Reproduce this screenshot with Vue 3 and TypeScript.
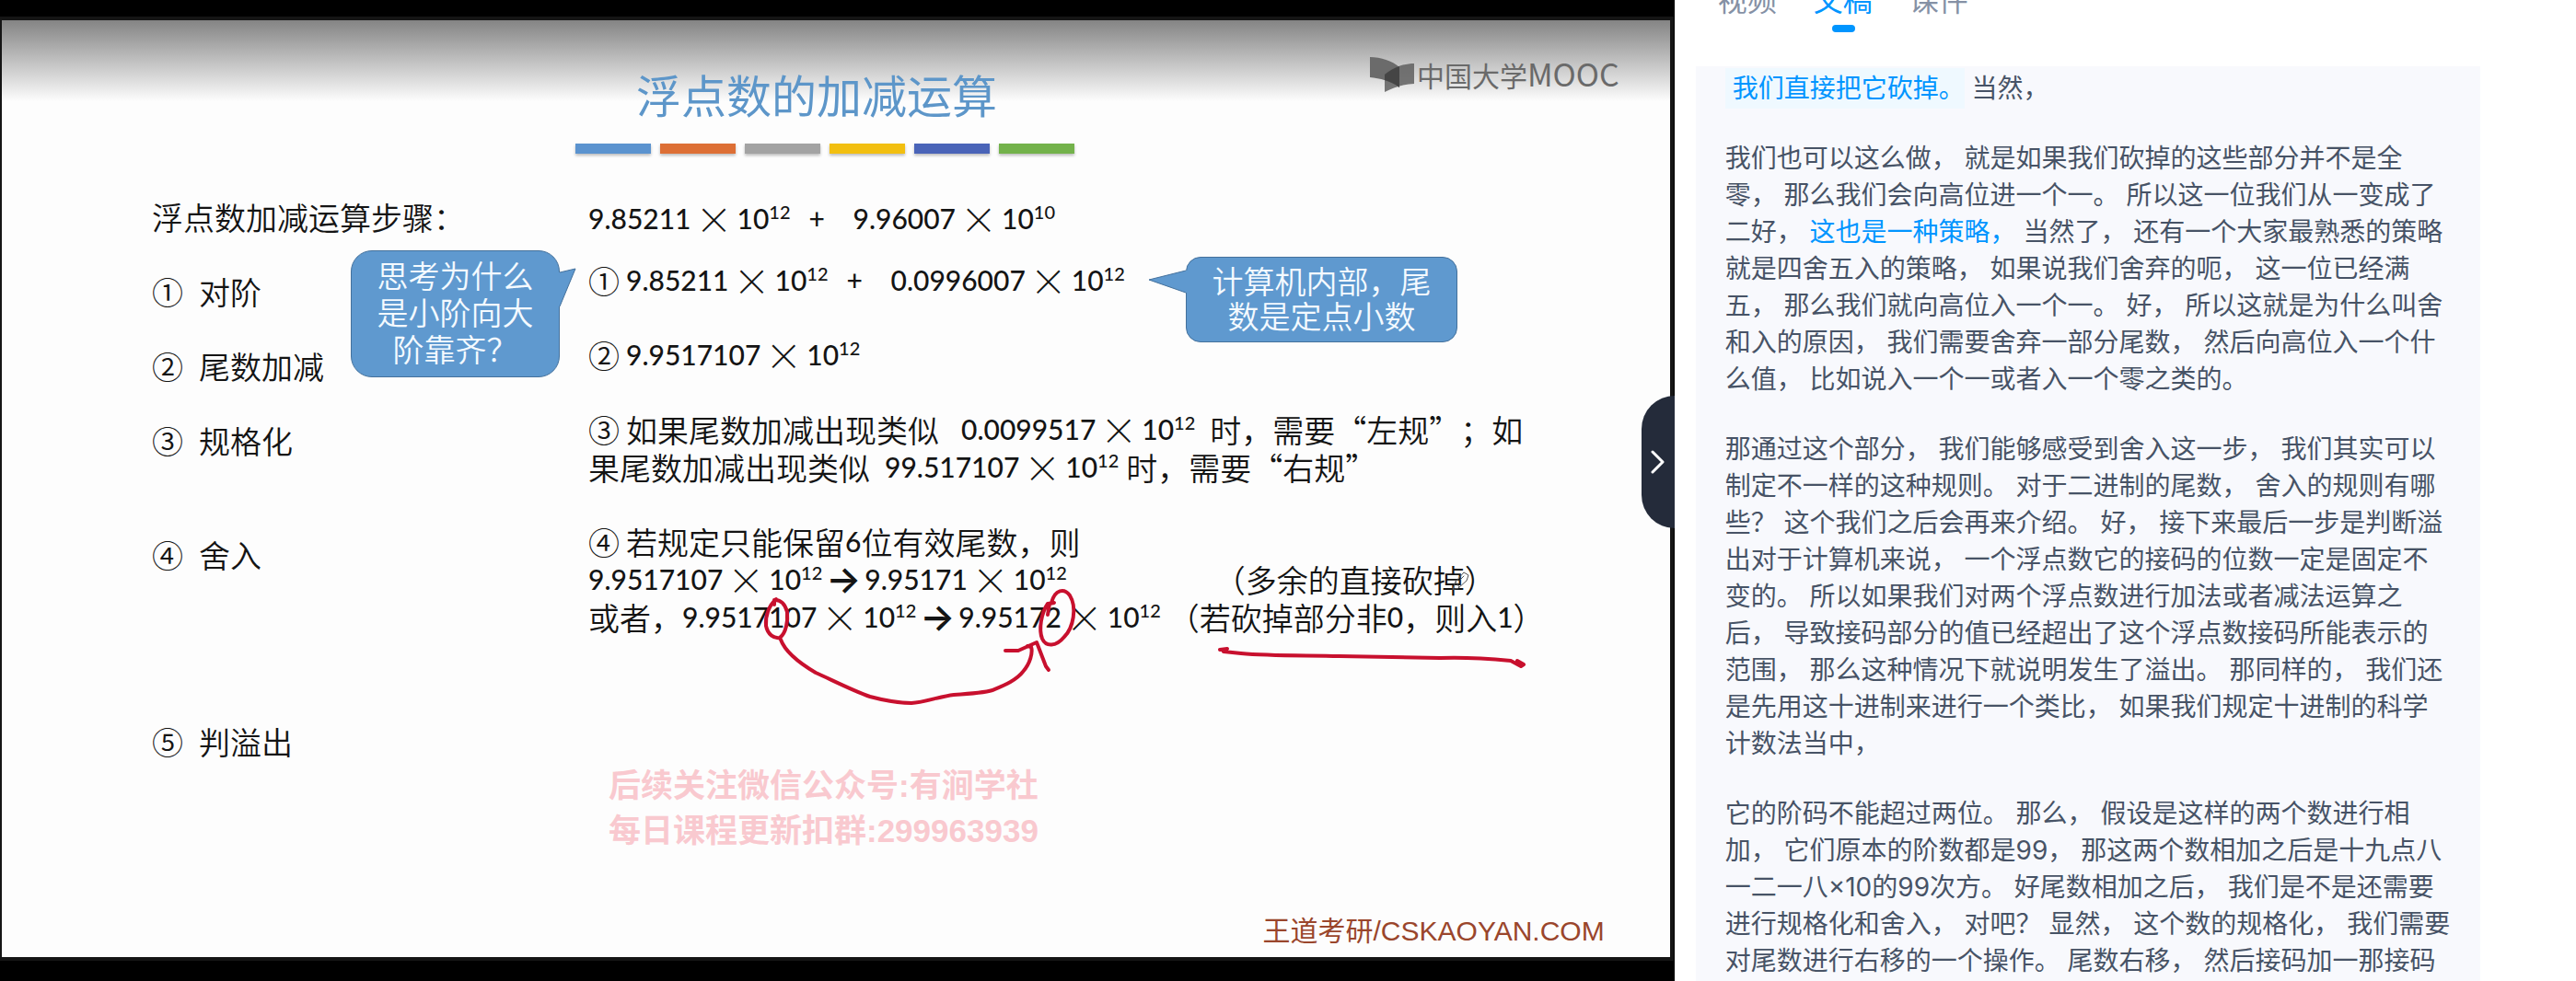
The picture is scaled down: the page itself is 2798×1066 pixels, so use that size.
<script setup lang="ts">
import { ref } from 'vue'

type PartKind = 'text' | 'num' | 'sup' | 'times' | 'plus' | 'arrow' | 'mark' | 'gap'
interface Part { kind: PartKind; value: string }
interface Line { gap: 'none' | 'small' | 'normal'; parts: Part[]; note?: Part[] }
interface Step { mark: string; label: string; gap: 'none' | 'normal' | 'double' | 'wide' }
interface Segment { text: string; state?: 'current' | 'hot' }

const t = (value: string): Part => ({ kind: 'text', value })
const n = (value: string): Part => ({ kind: 'num', value })
const mark = (value: string): Part => ({ kind: 'mark', value })
const plus: Part = { kind: 'plus', value: '+' }
const arrow: Part = { kind: 'arrow', value: '→' }
const gap: Part = { kind: 'gap', value: ' ' }
const sci = (mantissa: string, exponent: string): Part[] => [
  n(mantissa), { kind: 'times', value: '×' }, n('10'), { kind: 'sup', value: exponent },
]

const bars = ['blue', 'orange', 'gray', 'yellow', 'indigo', 'green']

const steps: Step[] = [
  { mark: '①', label: '对阶', gap: 'normal' },
  { mark: '②', label: '尾数加减', gap: 'normal' },
  { mark: '③', label: '规格化', gap: 'normal' },
  { mark: '④', label: '舍入', gap: 'double' },
  { mark: '⑤', label: '判溢出', gap: 'wide' },
]

const lines: Line[] = [
  { gap: 'none', parts: [...sci('9.85211', '12'), plus, ...sci('9.96007', '10')] },
  { gap: 'small', parts: [mark('①'), ...sci('9.85211', '12'), plus, ...sci('0.0996007', '12')] },
  { gap: 'normal', parts: [mark('②'), ...sci('9.9517107', '12')] },
  { gap: 'normal', parts: [mark('③'), t('如果尾数加减出现类似'), gap, gap, gap, ...sci('0.0099517', '12'), gap, gap, t('时，需要“左规”；如')] },
  { gap: 'none', parts: [t('果尾数加减出现类似'), gap, gap, ...sci('99.517107', '12'), gap, t('时，需要“右规”')] },
  { gap: 'normal', parts: [mark('④'), t('若规定只能保留'), n('6'), t('位有效尾数，则')] },
  { gap: 'none', parts: [...sci('9.9517107', '12'), arrow, ...sci('9.95171', '12')], note: [t('（多余的直接砍掉）')] },
  { gap: 'none', parts: [t('或者，'), ...sci('9.9517107', '12'), arrow, ...sci('9.95172', '12'), gap, t('（若砍掉部分非'), n('0'), t('，则入'), n('1'), t('）')] },
]

const tabs = ['视频', '文稿', '课件']
const activeTab = ref('文稿')
const panelOpen = ref(true)

const paragraphs: Segment[][] = [
  [{ text: '我们直接把它砍掉。', state: 'current' }, { text: ' 当然，' }],
  [
    { text: '我们也可以这么做， 就是如果我们砍掉的这些部分并不是全零， 那么我们会向高位进一个一。 所以这一位我们从一变成了二好， ' },
    { text: '这也是一种策略，', state: 'hot' },
    { text: ' 当然了， 还有一个大家最熟悉的策略就是四舍五入的策略， 如果说我们舍弃的呃， 这一位已经满五， 那么我们就向高位入一个一。 好， 所以这就是为什么叫舍和入的原因， 我们需要舍弃一部分尾数， 然后向高位入一个什么值， 比如说入一个一或者入一个零之类的。' },
  ],
  [{ text: '那通过这个部分， 我们能够感受到舍入这一步， 我们其实可以制定不一样的这种规则。 对于二进制的尾数， 舍入的规则有哪些？ 这个我们之后会再来介绍。 好， 接下来最后一步是判断溢出对于计算机来说， 一个浮点数它的接码的位数一定是固定不变的。 所以如果我们对两个浮点数进行加法或者减法运算之后， 导致接码部分的值已经超出了这个浮点数接码所能表示的范围， 那么这种情况下就说明发生了溢出。 那同样的， 我们还是先用这十进制来进行一个类比， 如果我们规定十进制的科学计数法当中，' }],
  [{ text: '它的阶码不能超过两位。 那么， 假设是这样的两个数进行相加， 它们原本的阶数都是99， 那这两个数相加之后是十九点八一二一八×10的99次方。 好尾数相加之后， 我们是不是还需要进行规格化和舍入， 对吧？ 显然， 这个数的规格化， 我们需要对尾数进行右移的一个操作。 尾数右移， 然后接码加一那接码' }],
]
</script>

<template>
  <main class="page" lang="zh-CN">
    <section class="player">
      <div class="slide">
        <div class="shade"></div>

        <header class="slide-head">
          <h1 class="title">浮点数的加减运算</h1>
          <div class="bars">
            <span v-for="bar in bars" :key="bar" class="bar" :class="bar"></span>
          </div>
        </header>

        <div class="brand">
          <svg class="brand-icon" viewBox="0 0 48 40" aria-hidden="true">
            <path d="M0 1C12 1 24 5 32 12V34C22 27 11 24 0 23Z" fill="#6b6b6b" />
            <path d="M16 20C24 13 36 8 48 8V30C37 30 26 34 16 39Z" fill="#5f5f5f" fill-opacity=".85" />
            <path d="M16 20C21 16 26 13 32 11V34C27 30 22 28 16 26Z" fill="#454545" />
          </svg>
          <span class="brand-text">中国大学<span class="brand-latin">MOOC</span></span>
        </div>

        <div class="body">
          <div class="steps">
            <p class="line">浮点数加减运算步骤：</p>
            <p v-for="step in steps" :key="step.mark" class="line" :class="'gap-' + step.gap">
              <span class="step-mark">{{ step.mark }}</span>{{ step.label }}
            </p>
          </div>
          <div class="work">
            <p v-for="(line, i) in lines" :key="i" class="line" :class="'gap-' + line.gap">
              <span v-for="(part, j) in line.parts" :key="j" :class="part.kind">{{ part.value }}</span>
              <span v-if="line.note" class="note">
                <span v-for="(part, j) in line.note" :key="j" :class="part.kind">{{ part.value }}</span>
              </span>
            </p>
          </div>
        </div>

        <footer class="slide-foot">王道考研/CSKAOYAN.COM</footer>

        <aside class="callout why">
          <svg class="tail" viewBox="0 0 20 44" aria-hidden="true">
            <path class="tail-fill" d="M-2 5H1L18 1L1 42H-2Z" />
            <path class="tail-line" d="M1 5L18 1L1 42" />
          </svg>
          思考为什么<br />是小阶向大<br />阶靠齐？
        </aside>
        <aside class="callout fixed">
          <svg class="tail" viewBox="0 0 42 28" aria-hidden="true">
            <path class="tail-fill" d="M44 2H41L1 12L41 26H44Z" />
            <path class="tail-line" d="M41 2L1 12L41 26" />
          </svg>
          计算机内部，尾<br />数是定点小数
        </aside>

        <div class="watermark">后续关注微信公众号:有涧学社<br />每日课程更新扣群:299963939</div>

        <svg class="ink" viewBox="0 0 1818 1066" aria-hidden="true">
          <path d="M843 651C835 658 831 670 832 680C834 690 841 694 847 693C854 688 856 674 855 665C853 657 848 651 841 652V657" />
          <path d="M848 695C852 706 864 718 886 731C900 737 925 750 945 757C960 761 978 764 990 764C1005 763 1020 757 1036 755C1052 754 1068 753 1078 750C1092 744 1104 739 1111 730C1119 721 1122 709 1120 703L1116 702" />
          <path d="M1092 707H1106L1126 698L1136 724L1139 728" />
          <path d="M1138 668L1140 656L1145 655L1138 656C1131 666 1128 684 1132 694C1136 703 1147 703 1156 692C1166 682 1170 660 1162 647C1156 639 1146 640 1142 655" />
          <path d="M1325 706L1333 705L1329 708L1348 710C1380 713 1420 712 1455 713L1564 715C1590 714 1620 716 1641 718L1652 724L1655 722L1648 718" />
          <path class="pen" d="M1578 640L1581 632L1590 622L1595 625L1593 631L1584 639ZM1581 632L1585 638M1586 630L1590 626" />
        </svg>
      </div>

      <button class="toggle" type="button" aria-label="收起面板" :aria-expanded="panelOpen" @click="panelOpen = !panelOpen">
        <svg viewBox="0 0 16 26" width="16" height="26" aria-hidden="true">
          <path d="M2 2L13 13L2 24" fill="none" stroke="#fff" stroke-width="3" stroke-linecap="round" stroke-linejoin="round" />
        </svg>
      </button>
    </section>

    <section class="panel">
      <nav class="tabs">
        <button
          v-for="tab in tabs" :key="tab" type="button" class="tab"
          :class="{ active: tab === activeTab }" @click="activeTab = tab"
        >{{ tab }}</button>
      </nav>
      <article class="transcript">
        <p v-for="(paragraph, i) in paragraphs" :key="i" class="paragraph">
          <span v-for="(segment, j) in paragraph" :key="j" :class="segment.state">{{ segment.text }}</span>
        </p>
      </article>
    </section>
  </main>
</template>

<style>
body {
  margin: 0;
  background: #fff;
}
</style>

<style scoped>
.page {
  display: flex;
  height: 100vh;
  overflow: hidden;
  font-family: Inter, "Noto Sans CJK SC", sans-serif;
  text-spacing-trim: space-all;
}
p, h1 {
  margin: 0;
}
.player {
  position: relative;
  display: flex;
  flex: 0 0 65%;
  box-sizing: border-box;
  padding: 22px 5px 26px 2px;
  background: #000;
  overflow: hidden;
}
.slide {
  position: relative;
  display: flex;
  flex: 1;
  flex-direction: column;
  min-width: 0;
  background: #fdfdfd;
  box-shadow: 0 0 0 4px #151515;
  color: #141414;
  font-family: "Noto Sans CJK SC", sans-serif;
  font-weight: 350;
}
.shade {
  position: absolute;
  inset: 0 0 auto;
  height: 88px;
  background: linear-gradient(#848484, #b4b4b4 40%, #e4e4e4 80%, #fdfdfd);
}
.slide-head {
  position: relative;
  padding: 50px 0 0 623px;
}
.title {
  margin-left: 66px;
  font-size: 49px;
  line-height: 60px;
  font-weight: 400;
  color: #5d96c9;
}
.bars {
  display: flex;
  gap: 10px;
  margin-top: 24px;
}
.bar {
  width: 82px;
  height: 11px;
  box-shadow: 0 2px 3px #bbb;
}
.blue { background: #5b93cf; }
.orange { background: #dd6f35; }
.gray { background: #a3a3a3; }
.yellow { background: #f2bf10; }
.indigo { background: #4a64b8; }
.green { background: #73b24b; }

.brand {
  position: absolute;
  top: 38px;
  right: 55px;
  display: flex;
  align-items: center;
  gap: 3px;
  color: #6a6a6a;
}
.brand-icon {
  width: 48px;
  height: 40px;
}
.brand-text {
  font-size: 30px;
  line-height: 40px;
  font-weight: 400;
}
.brand-latin {
  font-size: 34px;
}

.body {
  display: grid;
  grid-template-columns: 474px 1fr;
  padding: 48px 0 0 163px;
}
.work {
  padding-top: 2px;
}
.line {
  display: flex;
  height: 41px;
  font-size: 34px;
  line-height: 41px;
  white-space: pre;
}
.gap-small { margin-top: 26px; }
.gap-normal { margin-top: 40px; }
.gap-double { margin-top: 83px; }
.gap-wide { margin-top: 162px; }
.step-mark {
  width: 51px;
}
.mark {
  width: 41px;
}
.num, .sup, .plus {
  font-family: Lato, sans-serif;
  font-size: 30px;
  font-weight: 500;
}
.sup {
  font-size: 20px;
  line-height: 26px;
}
.times {
  width: 50px;
  text-align: center;
  font-size: 40px;
  font-weight: 300;
}
.plus {
  box-sizing: border-box;
  width: 68px;
  padding-left: 20px;
}
.arrow {
  width: 46px;
  text-align: center;
  font-family: Inter, sans-serif;
  font-size: 40px;
  font-weight: 600;
}
.gap {
  width: 8px;
}
.note {
  margin-left: 160px;
}
.slide-foot {
  margin: auto 71px 8px auto;
  font-family: "Liberation Sans", "Noto Sans CJK SC", sans-serif;
  font-size: 30px;
  line-height: 40px;
  font-weight: 400;
  color: #9a462c;
}

.callout {
  position: absolute;
  box-sizing: border-box;
  border: 1px solid #44719c;
  background: #5f99cf;
  color: #f4faff;
  font-size: 34px;
  text-align: center;
}
.why {
  top: 250px;
  left: 379px;
  width: 227px;
  padding: 6px 0 10px;
  border-radius: 23px;
  line-height: 40px;
}
.fixed {
  top: 257px;
  left: 1286px;
  width: 295px;
  padding: 6px 0 9px;
  border-radius: 16px;
  line-height: 38px;
}
.tail {
  position: absolute;
  overflow: visible;
}
.tail-fill {
  fill: #5f99cf;
}
.tail-line {
  fill: none;
  stroke: #44719c;
}
.why .tail {
  top: 18px;
  left: 100%;
  width: 20px;
  height: 44px;
}
.fixed .tail {
  top: 12px;
  right: 100%;
  width: 42px;
  height: 28px;
}
.watermark {
  position: absolute;
  top: 807px;
  left: 659px;
  font-family: "Liberation Sans", "Noto Sans CJK SC", sans-serif;
  font-size: 35px;
  line-height: 49px;
  font-weight: 700;
  white-space: nowrap;
  color: #f9c9cf;
}
.ink {
  position: absolute;
  top: -22px;
  left: -2px;
  width: 1818px;
  height: 1066px;
  fill: none;
  stroke: #c8102e;
  stroke-width: 4;
  stroke-linecap: round;
  stroke-linejoin: round;
  pointer-events: none;
}
.ink .pen {
  stroke: #555;
  stroke-width: 1;
}
.toggle {
  position: absolute;
  top: 50%;
  right: 0;
  display: flex;
  align-items: center;
  justify-content: center;
  width: 36px;
  height: 144px;
  margin-top: -103px;
  padding: 0;
  border: 0;
  border-radius: 36px 0 0 36px;
  background: #242b3a;
  cursor: pointer;
}

.panel {
  display: flex;
  flex: 1;
  flex-direction: column;
  min-width: 0;
  background: #fff;
}
.tabs {
  display: flex;
  flex: none;
  gap: 40px;
  margin: -19px 0 37px 47px;
}
.tab {
  position: relative;
  height: 54px;
  padding: 0 0 14px;
  border: 0;
  background: none;
  font-family: inherit;
  font-size: 32px;
  line-height: 40px;
  color: #8591a5;
  cursor: pointer;
}
.tab.active {
  color: #0095ff;
}
.tab.active::after {
  content: "";
  position: absolute;
  bottom: 0;
  left: 50%;
  width: 25px;
  height: 8px;
  margin-left: -12px;
  border-radius: 4px;
  background: #0095ff;
}
.transcript {
  flex: 1;
  min-height: 0;
  margin: 0 104px 0 23px;
  padding: 4px 32px 0;
  background: #f8f9fd;
  overflow: hidden;
}
.paragraph {
  margin-bottom: 36px;
  font-size: 28px;
  line-height: 40px;
  color: #475366;
}
.current {
  padding: 5px 0 5px 8px;
  background: #eff9ff;
  color: #0095ff;
}
.hot {
  color: #0095ff;
}
</style>
